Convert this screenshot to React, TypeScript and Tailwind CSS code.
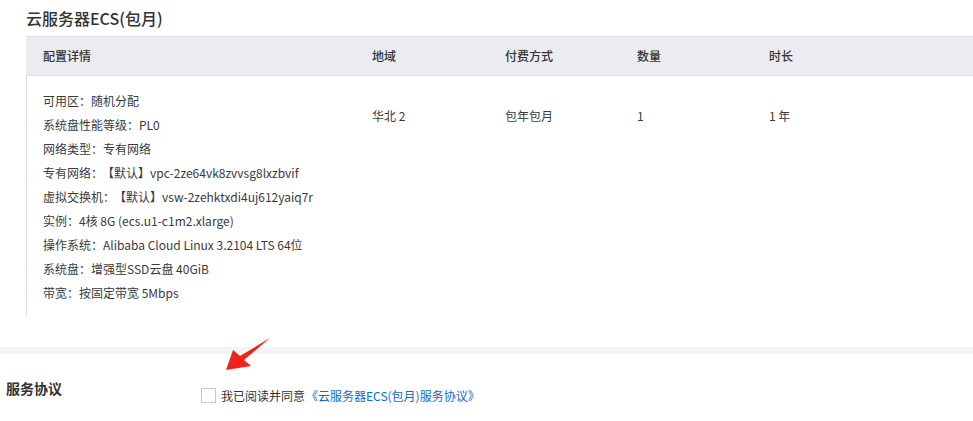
import React from "react";

const lines: [string, string?][] = [
  ["可用区：随机分配"],
  ["系统盘性能等级：PL0"],
  ["网络类型：专有网络"],
  ["专有网络：", "【默认】vpc-2ze64vk8zvvsg8lxzbvif"],
  ["虚拟交换机：", "【默认】vsw-2zehktxdi4uj612yaiq7r"],
  ["实例：4核 8G (ecs.u1-c1m2.xlarge)"],
  ["操作系统：Alibaba Cloud Linux 3.2104 LTS 64位"],
  ["系统盘：增强型SSD云盘 40GiB"],
  ["带宽：按固定带宽 5Mbps"],
];

export default function App() {
  const font = { fontFamily: '"Noto Sans CJK SC", "Noto Sans", sans-serif' };
  return (
    <div
      className="relative w-[973px] h-[421px] overflow-hidden bg-white text-[#333]"
      style={font}
    >
      <div className="pl-[26px]">
        <div className="h-[36px] flex items-center text-[16px] font-medium text-[#333] leading-none pb-[1px]">
          云服务器ECS(包月)
        </div>
        <div className="w-[960px]">
          <div className="flex h-[40px] items-center bg-[#ebecef] border-y border-[#dcdde0] text-[12px] font-medium text-[#333]">
            <div className="w-[329px] pl-[17px] box-content">配置详情</div>
            <div className="w-[133px]">地域</div>
            <div className="w-[132px]">付费方式</div>
            <div className="w-[132px]">数量</div>
            <div className="w-[132px]">时长</div>
          </div>
          <div className="flex border-l border-[#dcdde0] h-[240px] text-[12px] text-[#3a3a3a]">
            <div className="w-[329px] pl-[16px] pt-[13px] box-content leading-[24px]">
              {lines.map(([a, b]) => (
                <div key={a + (b ?? "")} className="whitespace-nowrap">
                  {a}
                  {b && <span className="ml-[5px]">{b}</span>}
                </div>
              ))}
            </div>
            <div className="w-[133px] pt-[28px] leading-[24px]">华北 2</div>
            <div className="w-[132px] pt-[28px] leading-[24px]">包年包月</div>
            <div className="w-[132px] pt-[28px] leading-[24px]">1</div>
            <div className="w-[132px] pt-[28px] leading-[24px]">1 年</div>
          </div>
        </div>
      </div>
      <div className="mt-[31px] h-[7px] bg-[#f4f4f5]" />
      <div className="flex items-center h-[67px] pl-[6px]">
        <div className="w-[195px] text-[14px] font-bold text-[#333] pt-[1px]">
          服务协议
        </div>
        <div className="flex items-center text-[12px] pt-[16px]">
          <span className="w-[15px] h-[15px] border border-[#c8c8c8] bg-white mr-[5px]" />
          <span className="text-[#333]">我已阅读并同意</span>
          <span className="text-[#0b6cc9] ml-[1px]">《云服务器ECS(包月)服务协议》</span>
        </div>
      </div>
      <svg
        className="absolute left-0 top-0 pointer-events-none"
        width="973"
        height="421"
        viewBox="0 0 973 421"
      >
        <polygon
          points="226,370 233,350 240,356 270,338 244,360 251,366"
          fill="#f0231a"
        />
      </svg>
    </div>
  );
}
